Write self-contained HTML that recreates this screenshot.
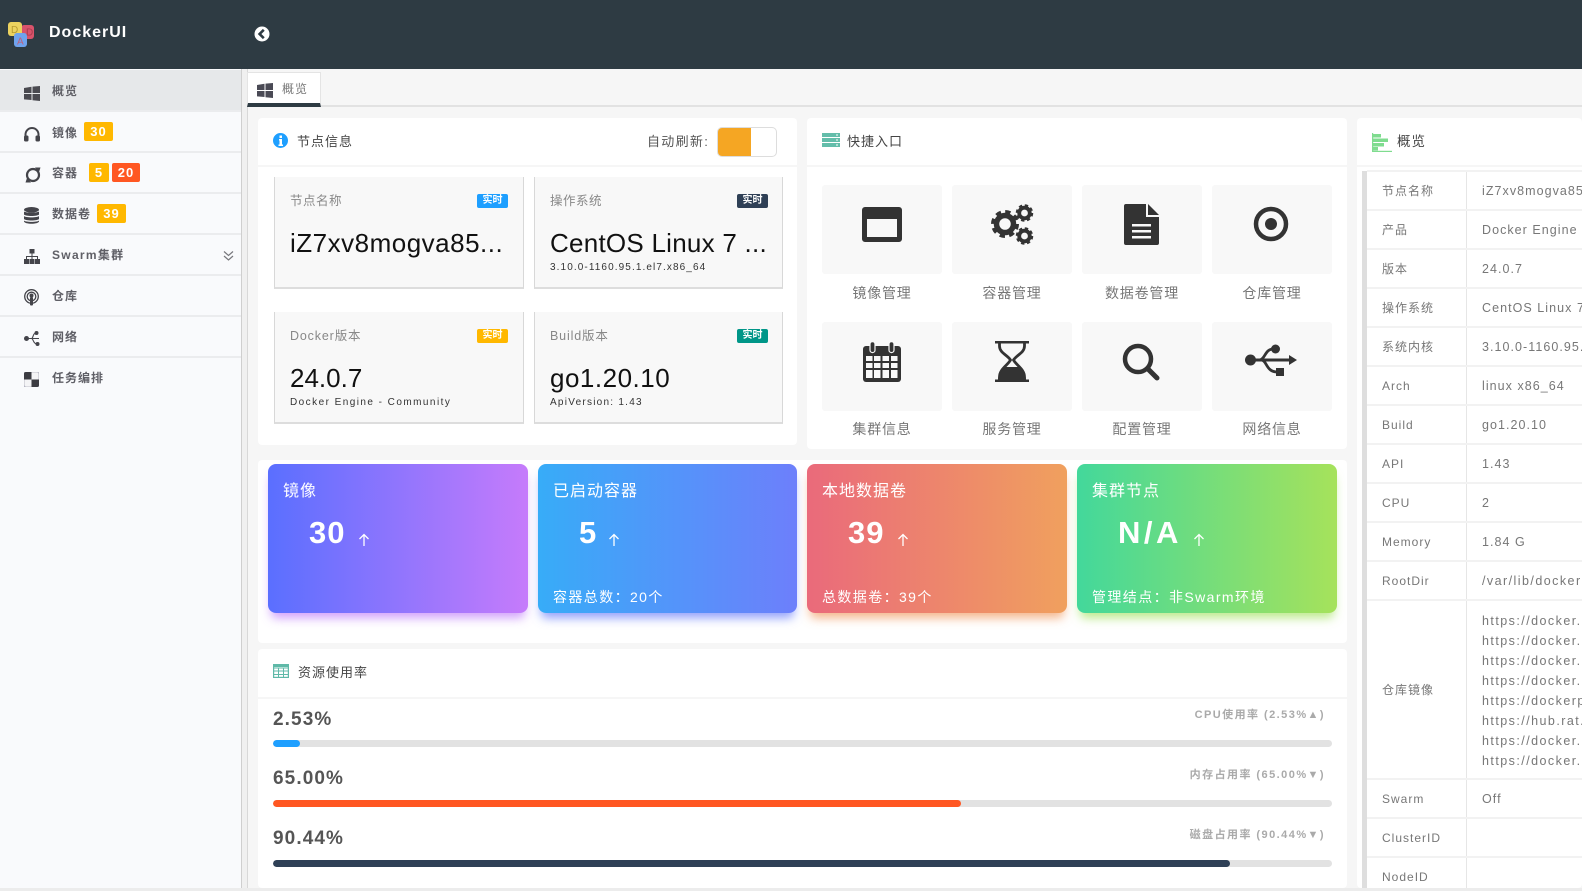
<!DOCTYPE html>
<html lang="zh"><head><meta charset="utf-8"><title>DockerUI</title>
<style>
*{box-sizing:border-box}
html,body{margin:0;padding:0;width:1582px;height:891px;overflow:hidden;background:#f6f6f6}
body{position:relative;font-family:"Liberation Sans","Noto Sans CJK SC",sans-serif;color:#666}
.a,.t,svg{position:absolute}
.t{white-space:nowrap;line-height:20px;letter-spacing:1px}
.nav{font-size:12px;font-weight:700;color:#5f5f66;left:52px}
.bd{position:absolute;color:#fff;font-weight:700;font-size:13px;text-align:center;height:19px;line-height:19px;border-radius:2px;letter-spacing:1px}
.div{position:absolute;left:0;width:241px;height:2px;background:#ebecee}
.panel{position:absolute;background:#fff;border-radius:4px}
.hl{position:absolute;height:2px;background:#f6f6f6}
.ttl{font-size:13px;color:#444}
.card{position:absolute;height:112px;background:#f8f8f8;border-left:1px solid #d8d8d8;border-right:1px solid #d8d8d8;border-bottom:2px solid #ddd}
.lab{font-size:12.5px;color:#888;letter-spacing:.5px}
.tag{position:absolute;width:31px;height:14px;border-radius:2px;color:#fff;font-size:10px;font-weight:700;line-height:14px;text-align:center}
.val{font-size:26px;color:#111;line-height:30px;letter-spacing:.5px}
.sub{font-size:10px;color:#333;letter-spacing:1.1px}
.tile{position:absolute;width:120px;height:89px;background:#f8f8f8;border-radius:3px}
.tl{position:absolute;width:120px;text-align:center;font-size:14px;color:#777;line-height:20px;letter-spacing:.8px}
.g{position:absolute;top:464px;height:149px;border-radius:8px}
.gt{font-size:16px;color:#fff}
.gn{font-size:31px;font-weight:700;color:#fff;line-height:36px;letter-spacing:1px}
.gb{font-size:14px;color:#fff;letter-spacing:1.4px}
.pc{font-size:19px;font-weight:700;color:#555;letter-spacing:1.1px}
.bar{position:absolute;left:273px;width:1059px;height:7px;background:#e2e2e2;border-radius:4px;overflow:hidden}
.bar i{display:block;height:7px;border-radius:4px}
.rl{font-size:11px;font-weight:700;color:#aaa;right:257px;letter-spacing:1.45px}
.sep{position:absolute;left:1367px;width:215px;height:2px;background:#f2f2f2}
.c1{font-size:12px;color:#777;left:1382px}
.c2{font-size:12.5px;color:#777;left:1482px;letter-spacing:1.05px;max-width:100px;overflow:hidden}
.c3{letter-spacing:1.45px}
</style></head><body>
<!-- header -->
<div class="a" style="left:0;top:0;width:1582px;height:69px;background:#2e3b43"></div>
<svg style="left:8px;top:21px" width="28" height="27" viewBox="0 0 28 27"><rect x="13" y="4" width="13" height="14" rx="3" fill="#d9536b"/><rect x="0" y="1" width="14" height="14" rx="3" fill="#ecd25f"/><rect x="6" y="12" width="13" height="14" rx="3" fill="#6fa3ee"/><text x="3" y="12" font-size="10" fill="#b79a2f" font-family="Liberation Sans">D</text><text x="18" y="14.500" font-size="10" fill="#a83a4d" font-family="Liberation Sans">D</text><text x="9" y="23.500" font-size="10" fill="#c0607a" font-family="Liberation Sans">A</text></svg>
<div class="t" style="left:49px;top:23px;font-size:16px;font-weight:700;color:#fff">DockerUI</div>
<svg style="left:254px;top:26px" width="16" height="16" viewBox="0 0 16 16"><circle cx="8" cy="8" r="7.500" fill="#fff"/><path d="M9.800 3.800 5.600 8l4.200 4.200" fill="none" stroke="#2e3b43" stroke-width="2.600"/></svg>

<!-- sidebar -->
<div class="a" style="left:0;top:69px;width:241px;height:819px;background:#f9fafc"></div>
<div class="a" style="left:0;top:70px;width:241px;height:40px;background:#e6e8ea"></div>
<div class="a" style="left:241px;top:69px;width:1px;height:819px;background:#cfcfcf"></div>
<div class="a" style="left:242px;top:69px;width:5px;height:819px;background:#f0f0f0"></div>
<div class="a" style="left:247px;top:69px;width:1px;height:819px;background:#d8d8d8"></div>
<div class="div" style="top:110px"></div><div class="div" style="top:151px"></div><div class="div" style="top:192px"></div><div class="div" style="top:233px"></div><div class="div" style="top:274px"></div><div class="div" style="top:315px"></div><div class="div" style="top:356px"></div>
<svg style="left:24px;top:86px" width="16" height="15" viewBox="0 0 16 15"><path d="M0 2 7.500 .8V7H0zM8.500 .6 16 0v7H8.500zM0 8h7.500v6L0 13.400zM8.500 8H16v7l-7.500-.8z" fill="#4a4a50"/></svg>
<div class="t nav" style="top:81px">概览</div>
<svg style="left:24px;top:126px" width="16" height="16" viewBox="0 0 16 16"><path d="M1.500 12V8.500a6.500 6.500 0 0 1 13 0V12" fill="none" stroke="#44444a" stroke-width="2"/><rect x="0" y="9.500" width="4.500" height="6" rx="1.500" fill="#44444a"/><rect x="11.500" y="9.500" width="4.500" height="6" rx="1.500" fill="#44444a"/></svg>
<div class="t nav" style="top:123px">镜像</div>
<div class="bd" style="left:84px;top:122px;width:29px;background:#ffb800">30</div>
<svg style="left:25px;top:166px" width="16" height="17" viewBox="0 0 16 17"><circle cx="8" cy="9" r="6" fill="none" stroke="#44444a" stroke-width="2.200"/><path d="M10 1.500h5.500L14 6zM.5 16.500H6L2 12z" fill="#44444a"/></svg>
<div class="t nav" style="top:163px">容器</div>
<div class="bd" style="left:89px;top:163px;width:20px;background:#ffb800">5</div>
<div class="bd" style="left:112px;top:163px;width:28px;background:#ff5722">20</div>
<svg style="left:24px;top:207px" width="15" height="17" viewBox="0 0 15 17"><g fill="#44444a"><ellipse cx="7.500" cy="2.800" rx="7.500" ry="2.800"/><path d="M0 4.500c1.500 1.500 13.500 1.500 15 0V7.500C13.500 9.500 1.500 9.500 0 7.500zM0 9c1.500 1.800 13.500 1.800 15 0v3C13.500 14 1.500 14 0 12zM0 13.500c1.500 1.800 13.500 1.800 15 0v1C14 17.500 1 17.500 0 14.500z"/></g></svg>
<div class="t nav" style="top:204px">数据卷</div>
<div class="bd" style="left:97px;top:204px;width:29px;background:#ffb800">39</div>
<svg style="left:24px;top:249px" width="16" height="15" viewBox="0 0 16 15"><g fill="#44444a"><rect x="5.500" y="0" width="5" height="4.500"/><rect x="0" y="10" width="5" height="5"/><rect x="5.500" y="10" width="5" height="5"/><rect x="11" y="10" width="5" height="5"/><path d="M7.500 4.500h1v2.500h5.500v3h-1V8H8.500v2h-1V8H3v2H2V7h5.500z"/></g></svg>
<div class="t nav" style="top:245px;letter-spacing:1.3px">Swarm集群</div>
<svg style="left:223px;top:250px" width="11" height="12" viewBox="0 0 11 12"><path d="M1 1.500 5.500 5.500 10 1.500M1 6 5.500 10 10 6" fill="none" stroke="#77777c" stroke-width="1.200"/></svg>
<svg style="left:24px;top:289px" width="15" height="17" viewBox="0 0 15 17"><g fill="none" stroke="#44444a" stroke-width="1.300"><circle cx="7.500" cy="7.500" r="6.800"/><circle cx="7.500" cy="7.500" r="4.300"/></g><circle cx="7.500" cy="6.500" r="2" fill="#44444a"/><rect x="6" y="8" width="3" height="8.500" rx="1" fill="#44444a"/></svg>
<div class="t nav" style="top:286px">仓库</div>
<svg style="left:24px;top:331px" width="16" height="15" viewBox="0 0 16 15"><g fill="#44444a"><circle cx="2.500" cy="7.500" r="2.500"/><circle cx="12.500" cy="2" r="2"/><circle cx="13.500" cy="13" r="2"/></g><path d="M3 7.500h4.500C9.500 7.500 8.500 2 12 2M7.500 7.500C9.500 7.500 9 13 13 13M7.500 7.500H15" fill="none" stroke="#44444a" stroke-width="1.100"/></svg>
<div class="t nav" style="top:327px">网络</div>
<svg style="left:24px;top:372px" width="15" height="15" viewBox="0 0 15 15"><rect width="15" height="15" rx="2" fill="#f4f4f6" stroke="#8e8ea0" stroke-width=".6"/><path d="M2 0H7.500V7.500H0V2a2 2 0 0 1 2-2z" fill="#3c3c42"/><path d="M7.500 7.500H15V13a2 2 0 0 1-2 2H7.500z" fill="#3c3c42"/></svg>
<div class="t nav" style="top:368px">任务编排</div>

<!-- tab bar -->
<div class="a" style="left:248px;top:105px;width:1334px;height:2px;background:#e2e2e2"></div>
<div class="a" style="left:247px;top:72px;width:74px;height:35px;background:#fff;border:1px solid #e4e4e4;border-bottom:4px solid #2e3b43"></div>
<svg style="left:257px;top:83px" width="16" height="15" viewBox="0 0 16 15"><path d="M0 2 7.500 .8V7H0zM8.500 .6 16 0v7H8.500zM0 8h7.500v6L0 13.400zM8.500 8H16v7l-7.500-.8z" fill="#4a4a55"/></svg>
<div class="t" style="left:282px;top:79px;font-size:12px;color:#777">概览</div>

<!-- node info panel -->
<div class="panel" style="left:258px;top:118px;width:539px;height:327px"></div>
<div class="hl" style="left:258px;top:165px;width:539px"></div>
<svg style="left:273px;top:133px" width="15" height="15" viewBox="0 0 15 15"><circle cx="7.500" cy="7.500" r="7.500" fill="#1e9fff"/><path d="M6 6h3v5.500h1V13H5.500v-1.500h1V7.500H6zM6.500 2.500h2.500V5H6.500z" fill="#fff"/></svg>
<div class="t ttl" style="left:297px;top:132px">节点信息</div>
<div class="t" style="left:647px;top:132px;font-size:13px;color:#555;letter-spacing:1.3px">自动刷新:</div>
<div class="a" style="left:717px;top:127px;width:60px;height:30px;background:#fff;border:1px solid #ddd;border-radius:5px;overflow:hidden"><div style="width:33px;height:30px;background:#f5a623"></div></div>

<div class="card" style="left:274px;top:177px;width:250px"></div>
<div class="t lab" style="left:290px;top:191px">节点名称</div>
<div class="tag" style="left:477px;top:194px;background:#1e9fff">实时</div>
<div class="t val" style="left:290px;top:228px">iZ7xv8mogva85...</div>
<div class="card" style="left:534px;top:177px;width:249px"></div>
<div class="t lab" style="left:550px;top:191px">操作系统</div>
<div class="tag" style="left:737px;top:194px;background:#2f4056">实时</div>
<div class="t val" style="left:550px;top:228px;letter-spacing:.25px">CentOS Linux 7 ...</div>
<div class="t sub" style="left:550px;top:258px">3.10.0-1160.95.1.el7.x86_64</div>
<div class="card" style="left:274px;top:312px;width:250px"></div>
<div class="t lab" style="left:290px;top:326px;letter-spacing:.85px">Docker版本</div>
<div class="tag" style="left:477px;top:329px;background:#ffb800">实时</div>
<div class="t val" style="left:290px;top:363px;letter-spacing:0">24.0.7</div>
<div class="t sub" style="left:290px;top:393px;letter-spacing:1.45px">Docker Engine - Community</div>
<div class="card" style="left:534px;top:312px;width:249px"></div>
<div class="t lab" style="left:550px;top:326px;letter-spacing:.85px">Build版本</div>
<div class="tag" style="left:737px;top:329px;background:#009688">实时</div>
<div class="t val" style="left:550px;top:363px">go1.20.10</div>
<div class="t sub" style="left:550px;top:393px;letter-spacing:1.25px">ApiVersion: 1.43</div>

<!-- quick entry panel -->
<div class="panel" style="left:807px;top:118px;width:540px;height:331px"></div>
<div class="hl" style="left:807px;top:165px;width:540px"></div>
<svg style="left:822px;top:133px" width="18" height="14" viewBox="0 0 18 14"><g fill="#63bdaa"><rect width="18" height="4"/><rect y="5" width="18" height="4"/><rect y="10" width="18" height="4"/></g><g fill="#fff"><rect x="14" y="1.500" width="2" height="1"/><rect x="14" y="6.500" width="2" height="1"/><rect x="14" y="11.500" width="2" height="1"/></g></svg>
<div class="t ttl" style="left:847px;top:132px">快捷入口</div>

<div class="tile" style="left:822px;top:185px"></div><div class="tile" style="left:952px;top:185px"></div><div class="tile" style="left:1082px;top:185px"></div><div class="tile" style="left:1212px;top:185px"></div>
<div class="tile" style="left:822px;top:322px"></div><div class="tile" style="left:952px;top:322px"></div><div class="tile" style="left:1082px;top:322px"></div><div class="tile" style="left:1212px;top:322px"></div>
<div class="tl" style="left:822px;top:283px">镜像管理</div><div class="tl" style="left:952px;top:283px">容器管理</div><div class="tl" style="left:1082px;top:283px">数据卷管理</div><div class="tl" style="left:1212px;top:283px">仓库管理</div>
<div class="tl" style="left:822px;top:419px">集群信息</div><div class="tl" style="left:952px;top:419px">服务管理</div><div class="tl" style="left:1082px;top:419px">配置管理</div><div class="tl" style="left:1212px;top:419px">网络信息</div>

<svg style="left:862px;top:207px" width="40" height="35" viewBox="0 0 40 35"><path fill-rule="evenodd" d="M3 0h34a3 3 0 0 1 3 3v29a3 3 0 0 1-3 3H3a3 3 0 0 1-3-3V3a3 3 0 0 1 3-3zM5 12v18h30V12z" fill="#333"/></svg>
<svg style="left:989px;top:203px" width="46" height="44" viewBox="0 0 46 44"><g fill="none" stroke="#333"><circle cx="16" cy="21" r="12" stroke-width="4" stroke-dasharray="5.200 4.200"/><circle cx="16" cy="21" r="8.500" stroke-width="5.500"/><circle cx="35.500" cy="10" r="7.500" stroke-width="2.500" stroke-dasharray="3.300 2.600"/><circle cx="35.500" cy="10" r="5.300" stroke-width="3.800"/><circle cx="35.500" cy="33" r="7.500" stroke-width="2.500" stroke-dasharray="3.300 2.600"/><circle cx="35.500" cy="33" r="5.300" stroke-width="3.800"/></g></svg>
<svg style="left:1124px;top:204px" width="35" height="41" viewBox="0 0 35 41"><path d="M2 0h20v13h13v26a2 2 0 0 1-2 2H2a2 2 0 0 1-2-2V2a2 2 0 0 1 2-2zM24 0l11 11H24z" fill="#333"/><path d="M8 20h19v2.500H8zM8 26h19v2.500H8zM8 32h19v2.500H8z" fill="#f8f8f8"/></svg>
<svg style="left:1253px;top:206px" width="36" height="36" viewBox="0 0 36 36"><circle cx="18" cy="18" r="15" fill="none" stroke="#333" stroke-width="4.500"/><circle cx="18" cy="18" r="6" fill="#333"/></svg>
<svg style="left:863px;top:341px" width="38" height="41" viewBox="0 0 38 41"><path d="M3 5h32a3 3 0 0 1 3 3v30a3 3 0 0 1-3 3H3a3 3 0 0 1-3-3V8a3 3 0 0 1 3-3z" fill="#333"/><g fill="#f8f8f8"><rect x="3" y="15" width="6.500" height="5"/><rect x="11" y="15" width="6.500" height="5"/><rect x="19.500" y="15" width="6.500" height="5"/><rect x="28" y="15" width="6.500" height="5"/><rect x="3" y="22" width="6.500" height="5"/><rect x="11" y="22" width="6.500" height="5"/><rect x="19.500" y="22" width="6.500" height="5"/><rect x="28" y="22" width="6.500" height="5"/><rect x="3" y="29" width="6.500" height="8"/><rect x="11" y="29" width="6.500" height="8"/><rect x="19.500" y="29" width="6.500" height="8"/><rect x="28" y="29" width="6.500" height="8"/></g><g fill="#333" stroke="#f8f8f8" stroke-width="1.200"><rect x="7" y=".6" width="5" height="11" rx="2.500"/><rect x="26" y=".6" width="5" height="11" rx="2.500"/></g></svg>
<svg style="left:995px;top:341px" width="34" height="41" viewBox="0 0 34 41"><path d="M0 0h34v2.500H0zM0 38.500h34V41H0z" fill="#333"/><path d="M4.500 2v3c0 7 8 9 11 14C13 24 4.500 28 4.500 36v3M29.500 2v3c0 7-8 9-11 14C21 24 29.500 28 29.500 36v3" fill="none" stroke="#333" stroke-width="2.800"/><path d="M3 39C3 32 8 29 11 26h12c3 3 8 6 8 13z" fill="#333"/></svg>
<svg style="left:1122px;top:343px" width="38" height="38" viewBox="0 0 38 38"><circle cx="16" cy="16" r="13" fill="none" stroke="#333" stroke-width="4.500"/><path d="M26 26 35 35" stroke="#333" stroke-width="5" stroke-linecap="round"/></svg>
<svg style="left:1245px;top:344px" width="52" height="33" viewBox="0 0 52 33"><g fill="#333"><circle cx="5.500" cy="16" r="5.500"/><circle cx="30.500" cy="5" r="4.500"/><rect x="31" y="24" width="8" height="8"/><path d="M44 11l8 5-8 5v-3.500H5v-3h39z"/></g><path d="M14 16c6 0 6-11 14-11M16 16c6 0 5 12 16 12" fill="none" stroke="#333" stroke-width="2.800"/></svg>

<!-- stat cards -->
<div class="panel" style="left:258px;top:460px;width:1089px;height:183px"></div>
<div class="g" style="left:268px;width:260px;background:linear-gradient(90deg,#5a6fff,#c67bfb);box-shadow:0 8px 10px -3px rgba(190,120,250,.7)"></div>
<div class="g" style="left:538px;width:259px;background:linear-gradient(90deg,#37acf8,#6d7ffb);box-shadow:0 8px 10px -3px rgba(100,120,250,.7)"></div>
<div class="g" style="left:807px;width:260px;background:linear-gradient(90deg,#ea6a7b,#f0a05e);box-shadow:0 8px 10px -3px rgba(240,150,90,.7)"></div>
<div class="g" style="left:1077px;width:260px;background:linear-gradient(90deg,#43d89b,#a6e25b);box-shadow:0 8px 10px -3px rgba(160,225,90,.7)"></div>
<div class="t gt" style="left:283px;top:482px">镜像</div>
<div class="t gt" style="left:553px;top:482px">已启动容器</div>
<div class="t gt" style="left:822px;top:482px">本地数据卷</div>
<div class="t gt" style="left:1092px;top:482px">集群节点</div>
<div class="t gn" style="left:309px;top:515px">30</div>
<div class="t gn" style="left:579px;top:515px">5</div>
<div class="t gn" style="left:848px;top:515px">39</div>
<div class="t gn" style="left:1118px;top:515px;letter-spacing:3.5px">N/A</div>
<svg style="left:358px;top:533px" width="12" height="13" viewBox="0 0 12 13"><path d="M6 13V1.500M1.500 6 6 1.500 10.500 6" fill="none" stroke="#fff" stroke-width="1.300"/></svg>
<svg style="left:608px;top:533px" width="12" height="13" viewBox="0 0 12 13"><path d="M6 13V1.500M1.500 6 6 1.500 10.500 6" fill="none" stroke="#fff" stroke-width="1.300"/></svg>
<svg style="left:897px;top:533px" width="12" height="13" viewBox="0 0 12 13"><path d="M6 13V1.500M1.500 6 6 1.500 10.500 6" fill="none" stroke="#fff" stroke-width="1.300"/></svg>
<svg style="left:1193px;top:533px" width="12" height="13" viewBox="0 0 12 13"><path d="M6 13V1.500M1.500 6 6 1.500 10.500 6" fill="none" stroke="#fff" stroke-width="1.300"/></svg>
<div class="t gb" style="left:553px;top:587px">容器总数：20个</div>
<div class="t gb" style="left:822px;top:587px">总数据卷：39个</div>
<div class="t gb" style="left:1092px;top:587px">管理结点：非Swarm环境</div>

<!-- resource panel -->
<div class="panel" style="left:258px;top:649px;width:1089px;height:239px"></div>
<div class="hl" style="left:258px;top:697px;width:1089px"></div>
<svg style="left:273px;top:664px" width="16" height="14" viewBox="0 0 16 14"><rect x=".6" y=".6" width="14.800" height="12.800" fill="#fff" stroke="#5fb9a8" stroke-width="1.200"/><path d="M0 1h16v3H0zM5.500 4v10M10.500 4v10M0 7h16M0 10.500h16" fill="none" stroke="#5fb9a8" stroke-width="1"/><rect width="16" height="3" fill="#5fb9a8"/></svg>
<div class="t ttl" style="left:298px;top:663px">资源使用率</div>
<div class="t pc" style="left:273px;top:710px">2.53%</div>
<div class="t rl" style="top:705px">CPU使用率 (2.53%▲)</div>
<div class="bar" style="top:740px"><i style="width:27px;background:#1e9fff"></i></div>
<div class="t pc" style="left:273px;top:769px">65.00%</div>
<div class="t rl" style="top:765px">内存占用率 (65.00%▼)</div>
<div class="bar" style="top:800px"><i style="width:688px;background:#ff5722"></i></div>
<div class="t pc" style="left:273px;top:829px">90.44%</div>
<div class="t rl" style="top:825px">磁盘占用率 (90.44%▼)</div>
<div class="bar" style="top:860px"><i style="width:957px;background:#2f4056"></i></div>

<!-- overview panel -->
<div class="panel" style="left:1357px;top:118px;width:225px;height:770px"></div>
<div class="hl" style="left:1357px;top:165px;width:225px"></div>
<svg style="left:1372px;top:133px" width="20" height="19" viewBox="0 0 20 19"><g fill="#7fdc8f"><rect x="0" y="0" width="1.200" height="19"/><rect x="0" y="17.800" width="20" height="1.200"/><rect x="1" y="1" width="8" height="3.500"/><rect x="1" y="5.500" width="15" height="3.500"/><rect x="1" y="10" width="11" height="3.500"/><rect x="1" y="14" width="5" height="3.500"/></g></svg>
<div class="t" style="left:1397px;top:132px;font-size:13.5px;color:#444">概览</div>
<div class="a" style="left:1362px;top:171px;width:5px;height:717px;background:#dedede"></div>
<div class="a" style="left:1466px;top:171px;width:1px;height:717px;background:#e6e6e6"></div>
<div class="sep" style="top:170px"></div><div class="sep" style="top:209px"></div><div class="sep" style="top:248px"></div><div class="sep" style="top:287px"></div><div class="sep" style="top:326px"></div><div class="sep" style="top:365px"></div><div class="sep" style="top:404px"></div><div class="sep" style="top:443px"></div><div class="sep" style="top:482px"></div><div class="sep" style="top:521px"></div><div class="sep" style="top:560px"></div><div class="sep" style="top:599px"></div><div class="sep" style="top:778px"></div><div class="sep" style="top:817px"></div><div class="sep" style="top:856px"></div>

<div class="t c1" style="top:181px">节点名称</div><div class="t c2" style="top:181px">iZ7xv8mogva85hj3k</div>
<div class="t c1" style="top:220px">产品</div><div class="t c2" style="top:220px">Docker Engine - Community</div>
<div class="t c1" style="top:259px">版本</div><div class="t c2" style="top:259px">24.0.7</div>
<div class="t c1" style="top:298px">操作系统</div><div class="t c2" style="top:298px">CentOS Linux 7 (Core)</div>
<div class="t c1" style="top:337px">系统内核</div><div class="t c2" style="top:337px">3.10.0-1160.95.1.el7</div>
<div class="t c1" style="top:376px">Arch</div><div class="t c2" style="top:376px">linux x86_64</div>
<div class="t c1" style="top:415px">Build</div><div class="t c2" style="top:415px">go1.20.10</div>
<div class="t c1" style="top:454px">API</div><div class="t c2" style="top:454px">1.43</div>
<div class="t c1" style="top:493px">CPU</div><div class="t c2" style="top:493px">2</div>
<div class="t c1" style="top:532px">Memory</div><div class="t c2" style="top:532px">1.84 G</div>
<div class="t c1" style="top:571px">RootDir</div><div class="t c2 c3" style="top:571px">/var/lib/docker</div>
<div class="t c1" style="top:680px">仓库镜像</div>
<div class="t c2 c3" style="top:611px">https://docker.lms.run</div>
<div class="t c2 c3" style="top:631px">https://docker.nju.edu.cn</div>
<div class="t c2 c3" style="top:651px">https://docker.1panel.live</div>
<div class="t c2 c3" style="top:671px">https://docker.chenby.cn</div>
<div class="t c2 c3" style="top:691px">https://dockerpull.com</div>
<div class="t c2 c3" style="top:711px">https://hub.rat.dev</div>
<div class="t c2 c3" style="top:731px">https://docker.1ms.run</div>
<div class="t c2 c3" style="top:751px">https://docker.lmirror.cn</div>
<div class="t c1" style="top:789px">Swarm</div><div class="t c2" style="top:789px">Off</div>
<div class="t c1" style="top:828px">ClusterID</div>
<div class="t c1" style="top:867px">NodeID</div>

<!-- bottom strip -->
<div class="a" style="left:0;top:888px;width:1582px;height:3px;background:#ececec"></div>
</body></html>
